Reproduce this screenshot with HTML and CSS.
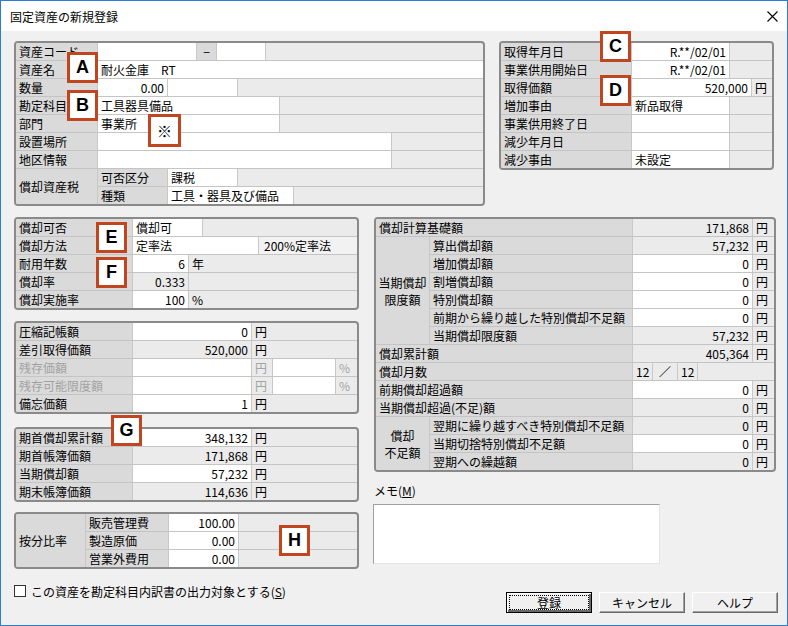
FILE: index.html
```html
<!DOCTYPE html>
<html lang="ja">
<head>
    <meta charset="UTF-8">
    <title>固定資産の新規登録</title>
    <link rel="stylesheet" href="styles.css">
</head>
<body>
<div class="window">
    <div class="titlebar">
        <span class="title">固定資産の新規登録</span>
        <svg class="close" width="11" height="11" viewBox="0 0 11 11"><path d="M0.5 0.5L10.5 10.5M10.5 0.5L0.5 10.5" stroke="#000" stroke-width="1.1"/></svg>
    </div>

    <div class="content">
        <!-- 上段 -->
        <div class="top">
            <div class="box asset">
                <div class="row"><div class="c lbl w82">資産コード</div><div class="c in w99"></div><div class="c lbl w20 ctr">−</div><div class="c in w49"></div><div class="c fill"></div></div>
                <div class="row"><div class="c lbl w82">資産名</div><div class="c in fill">耐火金庫　RT</div></div>
                <div class="row"><div class="c lbl w82">数量</div><div class="c in w70 num">0.00</div><div class="c in w70"></div><div class="c fill"></div></div>
                <div class="row"><div class="c lbl w82">勘定科目</div><div class="c in w182">工具器具備品</div><div class="c fill"></div></div>
                <div class="row"><div class="c lbl w82">部門</div><div class="c in w182">事業所</div><div class="c fill"></div></div>
                <div class="row"><div class="c lbl w82">設置場所</div><div class="c in w294"></div><div class="c fill"></div></div>
                <div class="row"><div class="c lbl w82">地区情報</div><div class="c in w294"></div><div class="c fill"></div></div>
                <div class="row grp">
                    <div class="c lbl w82 span">償却資産税</div>
                    <div class="sub">
                        <div class="row"><div class="c lbl w70">可否区分</div><div class="c in w70">課税</div><div class="c fill"></div></div>
                        <div class="row"><div class="c lbl w70">種類</div><div class="c in w126">工具・器具及び備品</div><div class="c fill"></div></div>
                    </div>
                </div>
            </div>

            <div class="box dates">
                <div class="row"><div class="c lbl w131">取得年月日</div><div class="c in w98 num">R.**/02/01</div><div class="c fill"></div></div>
                <div class="row"><div class="c lbl w131">事業供用開始日</div><div class="c in w98 num">R.**/02/01</div><div class="c fill"></div></div>
                <div class="row"><div class="c lbl w131">取得価額</div><div class="c in w120 num">520,000</div><div class="c fill">円</div></div>
                <div class="row"><div class="c lbl w131">増加事由</div><div class="c in w98">新品取得</div><div class="c fill"></div></div>
                <div class="row"><div class="c lbl w131">事業供用終了日</div><div class="c in w98"></div><div class="c fill"></div></div>
                <div class="row"><div class="c lbl w131">減少年月日</div><div class="c in w98"></div><div class="c fill"></div></div>
                <div class="row"><div class="c lbl w131">減少事由</div><div class="c in w98">未設定</div><div class="c fill"></div></div>
            </div>
        </div>

        <!-- 下段 -->
        <div class="bottom">
            <div class="left-col">
                <div class="box">
                    <div class="row"><div class="c lbl w117">償却可否</div><div class="c in w70">償却可</div><div class="c fill"></div></div>
                    <div class="row"><div class="c lbl w117">償却方法</div><div class="c in w126">定率法</div><div class="c fill light">200%定率法</div></div>
                    <div class="row"><div class="c lbl w117">耐用年数</div><div class="c in w56 num">6</div><div class="c fill">年</div></div>
                    <div class="row"><div class="c lbl w117">償却率</div><div class="c ro w56 num">0.333</div><div class="c fill"></div></div>
                    <div class="row"><div class="c lbl w117">償却実施率</div><div class="c in w56 num">100</div><div class="c fill">%</div></div>
                </div>

                <div class="box">
                    <div class="row"><div class="c lbl w117">圧縮記帳額</div><div class="c in w119 num">0</div><div class="c fill">円</div></div>
                    <div class="row"><div class="c lbl w117">差引取得価額</div><div class="c ro w119 num">520,000</div><div class="c fill">円</div></div>
                    <div class="row off"><div class="c lbl w117">残存価額</div><div class="c in w119"></div><div class="c w21">円</div><div class="c in w63"></div><div class="c fill">%</div></div>
                    <div class="row off"><div class="c lbl w117">残存可能限度額</div><div class="c in w119"></div><div class="c w21">円</div><div class="c in w63"></div><div class="c fill">%</div></div>
                    <div class="row"><div class="c lbl w117">備忘価額</div><div class="c in w119 num">1</div><div class="c fill">円</div></div>
                </div>

                <div class="box">
                    <div class="row"><div class="c lbl w117">期首償却累計額</div><div class="c in w119 num">348,132</div><div class="c fill">円</div></div>
                    <div class="row"><div class="c lbl w117">期首帳簿価額</div><div class="c ro w119 num">171,868</div><div class="c fill">円</div></div>
                    <div class="row"><div class="c lbl w117">当期償却額</div><div class="c in w119 num">57,232</div><div class="c fill">円</div></div>
                    <div class="row"><div class="c lbl w117">期末帳簿価額</div><div class="c ro w119 num">114,636</div><div class="c fill">円</div></div>
                </div>

                <div class="box">
                    <div class="row grp">
                        <div class="c lbl w70 span">按分比率</div>
                        <div class="sub">
                            <div class="row"><div class="c lbl w83">販売管理費</div><div class="c in w70 num">100.00</div><div class="c fill"></div></div>
                            <div class="row"><div class="c lbl w83">製造原価</div><div class="c in w70 num">0.00</div><div class="c fill"></div></div>
                            <div class="row"><div class="c lbl w83">営業外費用</div><div class="c in w70 num">0.00</div><div class="c fill"></div></div>
                        </div>
                    </div>
                </div>

                <label class="checkline"><span class="check"></span><span>この資産を勘定科目内訳書の出力対象とする(<u>S</u>)</span></label>
            </div>

            <div class="right-col">
                <div class="box calc">
                    <div class="row"><div class="c lbl w257">償却計算基礎額</div><div class="c ro w120 num">171,868</div><div class="c fill">円</div></div>
                    <div class="row grp">
                        <div class="c lbl w54 span center"><span>当期償却<br>限度額</span></div>
                        <div class="sub">
                            <div class="row"><div class="c lbl w203">算出償却額</div><div class="c ro w120 num">57,232</div><div class="c fill">円</div></div>
                            <div class="row"><div class="c lbl w203">増加償却額</div><div class="c in w120 num">0</div><div class="c fill">円</div></div>
                            <div class="row"><div class="c lbl w203">割増償却額</div><div class="c in w120 num">0</div><div class="c fill">円</div></div>
                            <div class="row"><div class="c lbl w203">特別償却額</div><div class="c in w120 num">0</div><div class="c fill">円</div></div>
                            <div class="row"><div class="c lbl w203">前期から繰り越した特別償却不足額</div><div class="c in w120 num">0</div><div class="c fill">円</div></div>
                            <div class="row"><div class="c lbl w203">当期償却限度額</div><div class="c ro w120 num">57,232</div><div class="c fill">円</div></div>
                        </div>
                    </div>
                    <div class="row"><div class="c lbl w257">償却累計額</div><div class="c ro w120 num">405,364</div><div class="c fill">円</div></div>
                    <div class="row"><div class="c lbl w257">償却月数</div><div class="c ro w20 num">12</div><div class="c ro w25 ctr">／</div><div class="c ro w20 num">12</div><div class="c fill"></div></div>
                    <div class="row"><div class="c lbl w257">前期償却超過額</div><div class="c in w120 num">0</div><div class="c fill">円</div></div>
                    <div class="row"><div class="c lbl w257">当期償却超過(不足)額</div><div class="c ro w120 num">0</div><div class="c fill">円</div></div>
                    <div class="row grp">
                        <div class="c lbl w54 span center"><span>償却<br>不足額</span></div>
                        <div class="sub">
                            <div class="row"><div class="c lbl w203">翌期に繰り越すべき特別償却不足額</div><div class="c ro w120 num">0</div><div class="c fill">円</div></div>
                            <div class="row"><div class="c lbl w203">当期切捨特別償却不足額</div><div class="c in w120 num">0</div><div class="c fill">円</div></div>
                            <div class="row"><div class="c lbl w203">翌期への繰越額</div><div class="c ro w120 num">0</div><div class="c fill">円</div></div>
                        </div>
                    </div>
                </div>

                <div class="memo-label">メモ(<u>M</u>)</div>
                <div class="memo"></div>

                <div class="buttons">
                    <button class="btn default"><span>登録</span></button>
                    <button class="btn">キャンセル</button>
                    <button class="btn">ヘルプ</button>
                </div>
            </div>
        </div>
    </div>

    <!-- 注記マーカー -->
    <div class="marker m-a">A</div>
    <div class="marker m-b">B</div>
    <div class="marker m-note">※</div>
    <div class="marker m-c">C</div>
    <div class="marker m-d">D</div>
    <div class="marker m-e">E</div>
    <div class="marker m-f">F</div>
    <div class="marker m-g">G</div>
    <div class="marker m-h">H</div>
</div>
</body>
</html>
```

FILE: styles.css
```css
body {
    margin: 0;
    background: #fff;
    font-family: "Noto Sans CJK JP", "Liberation Sans", sans-serif;
    font-size: 12px;
    color: #000;
}

.window {
    position: relative;
    width: 788px;
    height: 626px;
    box-sizing: border-box;
    border: 1px solid #2b7cd3;
    background: #f0f0f0;
    overflow: hidden;
}

.titlebar {
    height: 30px;
    background: #fff;
    display: flex;
    align-items: center;
    justify-content: space-between;
    padding: 0 9px;
}

.title {
    font-size: 12px;
}

.content {
    padding: 10px 0 0 13px;
}

.top {
    display: flex;
    gap: 14px;
    align-items: flex-start;
}

.bottom {
    display: flex;
    gap: 15px;
    margin-top: 11px;
}

.left-col {
    width: 345px;
    display: flex;
    flex-direction: column;
}

.left-col .box + .box {
    margin-top: 11px;
}

.left-col .box:nth-child(3) {
    margin-top: 13px;
}

.left-col .box:nth-child(4) {
    margin-top: 10px;
}

.right-col {
    width: 404px;
    display: flex;
    flex-direction: column;
}

/* 枠 */
.box {
    box-sizing: border-box;
    border: 2px solid #8a8a8a;
    border-radius: 4px;
    background: #ebebeb;
    overflow: hidden;
}

.asset { width: 471px; }
.dates { width: 275px; }
.calc { width: 402px; }

.row {
    display: flex;
    height: 18px;
    box-sizing: border-box;
    border-bottom: 1px solid #c4c4c4;
}

.row:last-child {
    border-bottom: 0;
    height: 17px;
}

.grp,
.grp:last-child {
    height: auto;
}

.sub {
    flex: 1;
    display: flex;
    flex-direction: column;
}

.c {
    box-sizing: border-box;
    flex-shrink: 0;
    height: 17px;
    line-height: 17px;
    padding: 0 3px;
    border-right: 1px solid #c8c8c8;
    white-space: nowrap;
    overflow: hidden;
}

.c.span {
    height: auto;
    display: flex;
    align-items: center;
    line-height: 17px;
}

.c.center {
    justify-content: center;
    text-align: center;
    padding: 0;
}

.fill {
    flex: 1;
    border-right: 0;
}

.lbl { background: #dadada; }
.in { background: #fff; }
.ro { background: #ebebeb; }
.light { background: #f2f2f2; padding-left: 5px; }

.num { text-align: right; }
.ctr { text-align: center; padding: 0; }

.off { color: #a3a3a3; }

.w20 { width: 20px; }
.w21 { width: 21px; }
.w25 { width: 25px; }
.w49 { width: 49px; }
.w54 { width: 54px; }
.w56 { width: 56px; }
.w63 { width: 63px; }
.w70 { width: 70px; }
.w82 { width: 82px; }
.w83 { width: 83px; }
.w98 { width: 98px; }
.w99 { width: 99px; }
.w117 { width: 117px; }
.w119 { width: 119px; }
.w120 { width: 120px; }
.w126 { width: 126px; }
.w131 { width: 131px; }
.w182 { width: 182px; }
.w203 { width: 203px; }
.w257 { width: 257px; }
.w294 { width: 294px; }

/* チェックボックス */
.checkline {
    display: flex;
    align-items: center;
    gap: 5px;
    margin-top: 15px;
    height: 14px;
}

.check {
    width: 12px;
    height: 12px;
    box-sizing: border-box;
    border: 1px solid #333;
    background: #fff;
}

/* メモ */
.memo-label {
    margin-top: 12px;
    line-height: 14px;
}

.memo {
    width: 287px;
    height: 60px;
    box-sizing: border-box;
    margin-top: 6px;
    margin-left: -1px;
    background: #fff;
    border: 1px solid;
    border-color: #a0a0a0 #e3e3e3 #e3e3e3 #a0a0a0;
}

/* ボタン */
.buttons {
    display: flex;
    gap: 7px;
    justify-content: flex-end;
    margin-top: 28px;
}

.btn {
    width: 86px;
    height: 21px;
    box-sizing: border-box;
    padding: 0;
    font-family: inherit;
    font-size: 12px;
    background: #f0f0f0;
    border: 1px solid;
    border-color: #fff #696969 #696969 #fff;
    box-shadow: inset -1px -1px #a0a0a0;
}

.btn.default {
    border: 1px solid #000;
    box-shadow: inset 1px 1px #fff, inset -2px -2px #696969;
    padding: 2px;
}

.btn.default span {
    display: block;
    height: 100%;
    box-sizing: border-box;
    border: 1px dotted #000;
    line-height: 13px;
}

/* 注記マーカー */
.marker {
    position: absolute;
    width: 31px;
    height: 31px;
    box-sizing: border-box;
    border: 3px solid #c1461f;
    background: #fff;
    display: flex;
    align-items: center;
    justify-content: center;
    font-family: "Liberation Sans", sans-serif;
    font-weight: bold;
    font-size: 18px;
}

.m-a { left: 66px; top: 51px; }
.m-b { left: 66px; top: 89px; }
.m-note { left: 147px; top: 113px; width: 33px; height: 33px; font-size: 15px; font-family: "Noto Sans CJK JP", sans-serif; font-weight: normal; }
.m-c { left: 599px; top: 30px; }
.m-d { left: 599px; top: 74px; }
.m-e { left: 95px; top: 221px; }
.m-f { left: 95px; top: 256px; }
.m-g { left: 110px; top: 414px; }
.m-h { left: 278px; top: 524px; }
```
